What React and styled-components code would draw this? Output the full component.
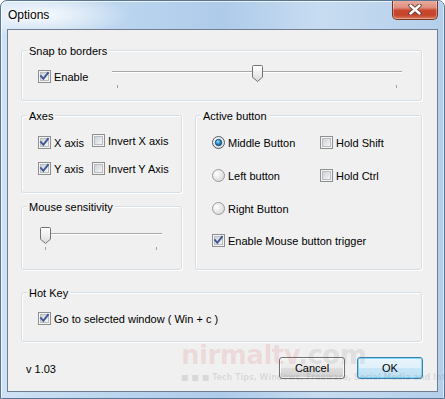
import React from 'react';
import styled, { createGlobalStyle } from 'styled-components';

const Global = createGlobalStyle`
  html, body { margin: 0; padding: 0; }
  body {
    width: 445px; height: 399px; overflow: hidden;
    font-family: "Liberation Sans", Arial, sans-serif;
    font-size: 11px; color: #000;
  }
`;

const Window = styled.div`
  position: relative;
  width: 445px;
  height: 399px;
  box-sizing: border-box;
  display: flex;
  flex-direction: column;
  border: 1px solid #5b7594;
  border-radius: 7px 7px 0 0;
  overflow: hidden;
  background:
    radial-gradient(ellipse 90px 22px at 40px 14px, rgba(255,255,255,0.85), rgba(255,255,255,0) 100%),
    linear-gradient(to right, #cfe2f5 0%, #bcd6ef 25%, #aecbea 50%, #c7dcf1 72%, #b4cfeb 100%);
  box-shadow: inset 1px 1px 0 rgba(255,255,255,0.7), inset -1px 0 0 rgba(255,255,255,0.5);
`;

const TitleBar = styled.div`
  height: 28px;
  display: flex;
  align-items: flex-start;
  padding-left: 7px;
  flex: none;
`;

const Title = styled.div`
  margin-top: 7px;
  font-size: 12px;
  line-height: 14px;
  color: #000;
  text-shadow: 0 0 6px #fff, 0 0 3px #fff;
`;

const CloseButton = styled.div`
  margin-left: auto;
  margin-right: 6px;
  margin-top: -1px;
  width: 46px;
  height: 20px;
  box-sizing: border-box;
  border: 1px solid #7a3426;
  border-top: none;
  border-radius: 0 0 5px 5px;
  background: linear-gradient(#eab0a3 0%, #de8e7c 40%, #c9472d 55%, #c4452c 80%, #d9785d 100%);
  box-shadow: inset 0 0 0 1px rgba(255,255,255,0.35);
  display: flex;
  align-items: center;
  justify-content: center;
`;

const Client = styled.div`
  margin: 0 6px 6px 6px;
  flex: 1;
  box-sizing: border-box;
  border: 1px solid #6f7f91;
  background: #f0f0f0;
  padding: 20px 15px 12px 13px;
  display: flex;
  flex-direction: column;
`;

const Group = styled.div`
  position: relative;
  box-sizing: border-box;
  height: ${p => p.$h}px;
  border: 1px solid #d5dfe5;
  border-radius: 3px;
  box-shadow: inset 1px 1px 0 #fff, 1px 1px 0 #fff;
`;

const Legend = styled.div`
  position: absolute;
  top: -7px;
  left: 5px;
  padding: 0 2px;
  line-height: 14px;
  background: #f0f0f0;
  white-space: nowrap;
`;

const SnapBody = styled.div`
  display: flex;
  align-items: flex-start;
  padding: 14px 19px 0 16px;
`;

const Main = styled.div`
  display: grid;
  grid-template-columns: 161px 227px;
  column-gap: 13px;
  margin-top: 14px;
`;

const Column = styled.div`
  display: flex;
  flex-direction: column;
  gap: 13px;
`;

const AxesGrid = styled.div`
  display: grid;
  grid-template-columns: 54px auto;
  grid-auto-rows: 13px;
  row-gap: 13px;
  padding: 20px 0 0 16px;
`;

const SensBody = styled.div`
  padding: 20px 0 0 18px;
`;

const ActiveGrid = styled.div`
  display: grid;
  grid-template-columns: 108px auto;
  grid-template-rows: 13px 13px 12px 13px;
  row-gap: 20px;
  padding: 20px 0 0 16px;
`;

const HotBody = styled.div`
  padding: 19px 0 0 16px;
`;

const Label = styled.div`
  display: flex;
  align-items: flex-start;
  gap: 3px;
  height: 13px;
  margin-top: ${p => (p.$dy || 0)}px;
  grid-column: ${p => (p.$span ? '1 / span 2' : 'auto')};
  white-space: nowrap;
  svg { flex: none; }
`;

const LabelText = styled.span`
  line-height: 13px;
  margin-top: 1px;
`;

const SliderBox = styled.svg`
  display: block;
  flex: none;
  margin-left: ${p => (p.$auto ? 'auto' : '0')};
`;

const Footer = styled.div`
  margin-top: 15px;
  margin-right: -1px;
  height: 22px;
  display: flex;
  align-items: flex-start;
  gap: 12px;
`;

const Version = styled.div`
  padding-left: 5px;
  padding-top: 1px;
  line-height: 22px;
  margin-right: auto;
`;

const Button = styled.div`
  width: 66px;
  height: 22px;
  box-sizing: border-box;
  border: 1px solid ${p => (p.$default ? '#3c7fb1' : '#707070')};
  border-radius: 3px;
  line-height: 20px;
  text-align: center;
  background: ${p => p.$default
    ? 'linear-gradient(#eaf5fc 0%, #dff0fa 48%, #c9e6f7 52%, #bddff4 100%)'
    : 'linear-gradient(#f2f2f2 0%, #ebebeb 48%, #dddddd 52%, #cfcfcf 100%)'};
  box-shadow: inset 0 0 0 1px ${p => (p.$default ? 'rgba(120,215,245,0.9)' : 'rgba(252,252,252,0.9)')};
`;

const Watermark = styled.div`
  position: absolute;
  left: 180px;
  top: 340px;
  pointer-events: none;
  display: flex;
  flex-direction: column;
`;

const WaterMain = styled.div`
  font-family: "DejaVu Sans", sans-serif;
  font-weight: bold;
  font-size: 26px;
  line-height: 28px;
  letter-spacing: -0.5px;
  color: rgba(215, 70, 70, 0.14);
  white-space: nowrap;
`;

const WaterCom = styled.span`
  color: rgba(110, 110, 110, 0.14);
`;

const WaterTag = styled.div`
  font-family: "DejaVu Sans", sans-serif;
  font-weight: bold;
  font-size: 8px;
  line-height: 10px;
  margin-top: 4px;
  color: rgba(90, 90, 90, 0.16);
  white-space: nowrap;
`;

function CheckIcon({ checked }) {
  return (
    <svg width="13" height="13" viewBox="0 0 13 13">
      <defs>
        <linearGradient id="cbg" x1="0" y1="0" x2="1" y2="1">
          <stop offset="0" stopColor="#cbcfd5" />
          <stop offset="1" stopColor="#f7f7f7" />
        </linearGradient>
      </defs>
      <rect x="0.5" y="0.5" width="12" height="12" fill="#f4f4f4" stroke="#8e8f8f" />
      <rect x="2.5" y="2.5" width="8" height="8" fill="url(#cbg)" stroke="#b9bdc2" />
      {checked && (
        <path d="M3 6.2 L5.3 8.8 L10 2.8" fill="none" stroke="#3f5694" strokeWidth="1.9" strokeLinecap="square" strokeLinejoin="miter" />
      )}
    </svg>
  );
}

function RadioIcon({ checked }) {
  return (
    <svg width="13" height="13" viewBox="0 0 13 13">
      <defs>
        <radialGradient id="rbg" cx="0.35" cy="0.35" r="0.8">
          <stop offset="0" stopColor="#ffffff" />
          <stop offset="1" stopColor="#d0d2d5" />
        </radialGradient>
        <radialGradient id="rdot" cx="0.4" cy="0.35" r="0.7">
          <stop offset="0" stopColor="#8fe0ff" />
          <stop offset="0.6" stopColor="#1b86c9" />
          <stop offset="1" stopColor="#0d4f8a" />
        </radialGradient>
      </defs>
      <circle cx="6.5" cy="6.5" r="6" fill="url(#rbg)" stroke={checked ? '#4c5d6e' : '#9a9b9c'} />
      {checked && <circle cx="6.5" cy="6.5" r="3.2" fill="url(#rdot)" stroke="#1a3a5e" strokeWidth="0.8" />}
    </svg>
  );
}

function Check({ checked, children, dy, span }) {
  return (
    <Label $dy={dy} $span={span}>
      <CheckIcon checked={checked} />
      <LabelText>{children}</LabelText>
    </Label>
  );
}

function Radio({ checked, children, dy }) {
  return (
    <Label $dy={dy}>
      <RadioIcon checked={checked} />
      <LabelText>{children}</LabelText>
    </Label>
  );
}

function Slider({ width, value, auto }) {
  const tx = Math.round(value * (width - 11));
  return (
    <SliderBox width={width} height="24" viewBox={`0 0 ${width} 24`} $auto={auto}>
      <defs>
        <linearGradient id="thumbg" x1="0" y1="0" x2="0" y2="1">
          <stop offset="0" stopColor="#ffffff" />
          <stop offset="0.55" stopColor="#ececec" />
          <stop offset="1" stopColor="#d6d6d6" />
        </linearGradient>
      </defs>
      <rect x="0" y="6" width={width} height="1" fill="#a8a8a8" />
      <rect x="0" y="7" width={width} height="1" fill="#ffffff" />
      <rect x="5" y="20" width="1" height="3" fill="#a0a0a0" />
      <rect x={width - 6} y="20" width="1" height="3" fill="#a0a0a0" />
      <path
        transform={`translate(${tx},0)`}
        d="M1.5 0.5 H9.5 Q10.5 0.5 10.5 1.5 V12.2 L5.5 16.5 L0.5 12.2 V1.5 Q0.5 0.5 1.5 0.5 Z"
        fill="url(#thumbg)"
        stroke="#727272"
      />
    </SliderBox>
  );
}

export default function App() {
  return (
    <>
      <Global />
      <Window>
        <TitleBar>
          <Title>Options</Title>
          <CloseButton>
            <svg width="14" height="11" viewBox="0 0 14 11">
              <path d="M2.5 1.5 L11.5 9.5 M11.5 1.5 L2.5 9.5" stroke="#5a3a36" strokeWidth="4.2" strokeLinecap="round" />
              <path d="M2.5 1.5 L11.5 9.5 M11.5 1.5 L2.5 9.5" stroke="#ffffff" strokeWidth="2.4" strokeLinecap="round" />
            </svg>
          </CloseButton>
        </TitleBar>
        <Client>
          <Group $h={51}>
            <Legend>Snap to borders</Legend>
            <SnapBody>
              <Check checked dy={5}>Enable</Check>
              <Slider width={290} value={0.5} auto />
            </SnapBody>
          </Group>
          <Main>
            <Column>
              <Group $h={78}>
                <Legend>Axes</Legend>
                <AxesGrid>
                  <Check checked>X axis</Check>
                  <Check dy={-2}>Invert X axis</Check>
                  <Check checked>Y axis</Check>
                  <Check>Invert Y Axis</Check>
                </AxesGrid>
              </Group>
              <Group $h={64}>
                <Legend>Mouse sensitivity</Legend>
                <SensBody>
                  <Slider width={122} value={0} />
                </SensBody>
              </Group>
            </Column>
            <Group $h={155}>
              <Legend>Active button</Legend>
              <ActiveGrid>
                <Radio checked>Middle Button</Radio>
                <Check>Hold Shift</Check>
                <Radio>Left button</Radio>
                <Check>Hold Ctrl</Check>
                <Radio>Right Button</Radio>
                <span />
                <Check checked span>Enable Mouse button trigger</Check>
              </ActiveGrid>
            </Group>
          </Main>
          <Group $h={50} style={{ marginTop: 22 }}>
            <Legend>Hot Key</Legend>
            <HotBody>
              <Check checked>Go to selected window ( Win + c )</Check>
            </HotBody>
          </Group>
          <Footer>
            <Version>v 1.03</Version>
            <Button>Cancel</Button>
            <Button $default>OK</Button>
          </Footer>
        </Client>
        <Watermark>
          <WaterMain>nirmaltv<WaterCom>.com</WaterCom></WaterMain>
          <WaterTag>■ ■ ■ Tech Tips, Windows, Freeware, Social Media and Internet</WaterTag>
        </Watermark>
      </Window>
    </>
  );
}
